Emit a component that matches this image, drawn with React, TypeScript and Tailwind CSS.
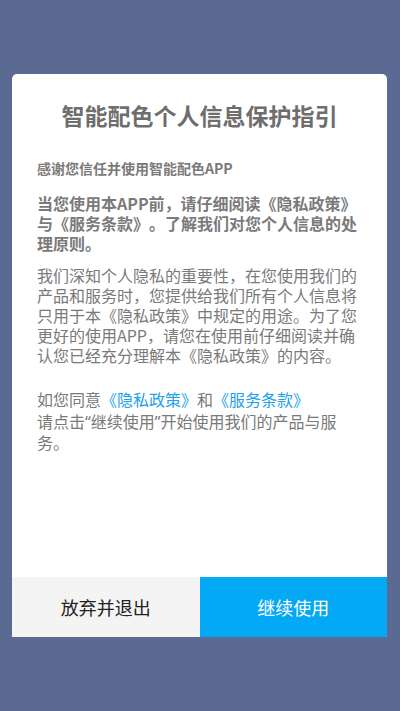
import React from "react";

export default function App() {
  return (
    <div
      className="w-[400px] h-[711px] bg-[#5a6a93] pt-[74px] pl-[12px] overflow-hidden [text-spacing-trim:space-all]"
      style={{ fontFamily: '"Noto Sans CJK SC", "Noto Sans", sans-serif' }}
    >
      <div className="w-[375px] h-[563px] bg-white rounded-t-[5px] flex flex-col overflow-hidden">
        <div className="flex-1 px-[25px] pt-[26px] flex flex-col">
          <h1 className="text-[23px] leading-[30px] font-bold text-[#6e6e6e] text-center">
            智能配色个人信息保护指引
          </h1>
          <p className="mt-[28px] text-[14px] leading-[20px] font-bold text-[#7a7a7a]">
            感谢您信任并使用智能配色APP
          </p>
          <p className="mt-[15px] text-[16px] leading-[20px] font-bold text-[#7a7a7a]">
            当您使用本APP前，请仔细阅读《隐私政策》与《服务条款》。了解我们对您个人信息的处理原则。
          </p>
          <p className="mt-[12px] text-[16px] leading-[20px] text-[#7a7a7a]">
            我们深知个人隐私的重要性，在您使用我们的产品和服务时，您提供给我们所有个人信息将只用于本《隐私政策》中规定的用途。为了您更好的使用APP，请您在使用前仔细阅读并确认您已经充分理解本《隐私政策》的内容。
          </p>
          <div className="mt-[23px] text-[16px] text-[#7a7a7a]">
            <p className="leading-[23px]">
              如您同意<span className="text-[#22a0e8]">《隐私政策》</span>和<span className="text-[#22a0e8]">《服务条款》</span>
            </p>
            <p className="mt-[1px] leading-[21px] font-['Noto_Sans','Noto_Sans_CJK_SC',sans-serif]">
              请点击“继续使用”开始使用我们的产品与服务。
            </p>
          </div>
        </div>
        <div className="h-[60px] flex">
          <button className="flex-1 bg-[#f4f4f4] text-[#222222] text-[18px] flex items-center justify-center">
            放弃并退出
          </button>
          <button className="flex-1 bg-[#03a9f4] text-white text-[18px] flex items-center justify-center">
            继续使用
          </button>
        </div>
      </div>
    </div>
  );
}
